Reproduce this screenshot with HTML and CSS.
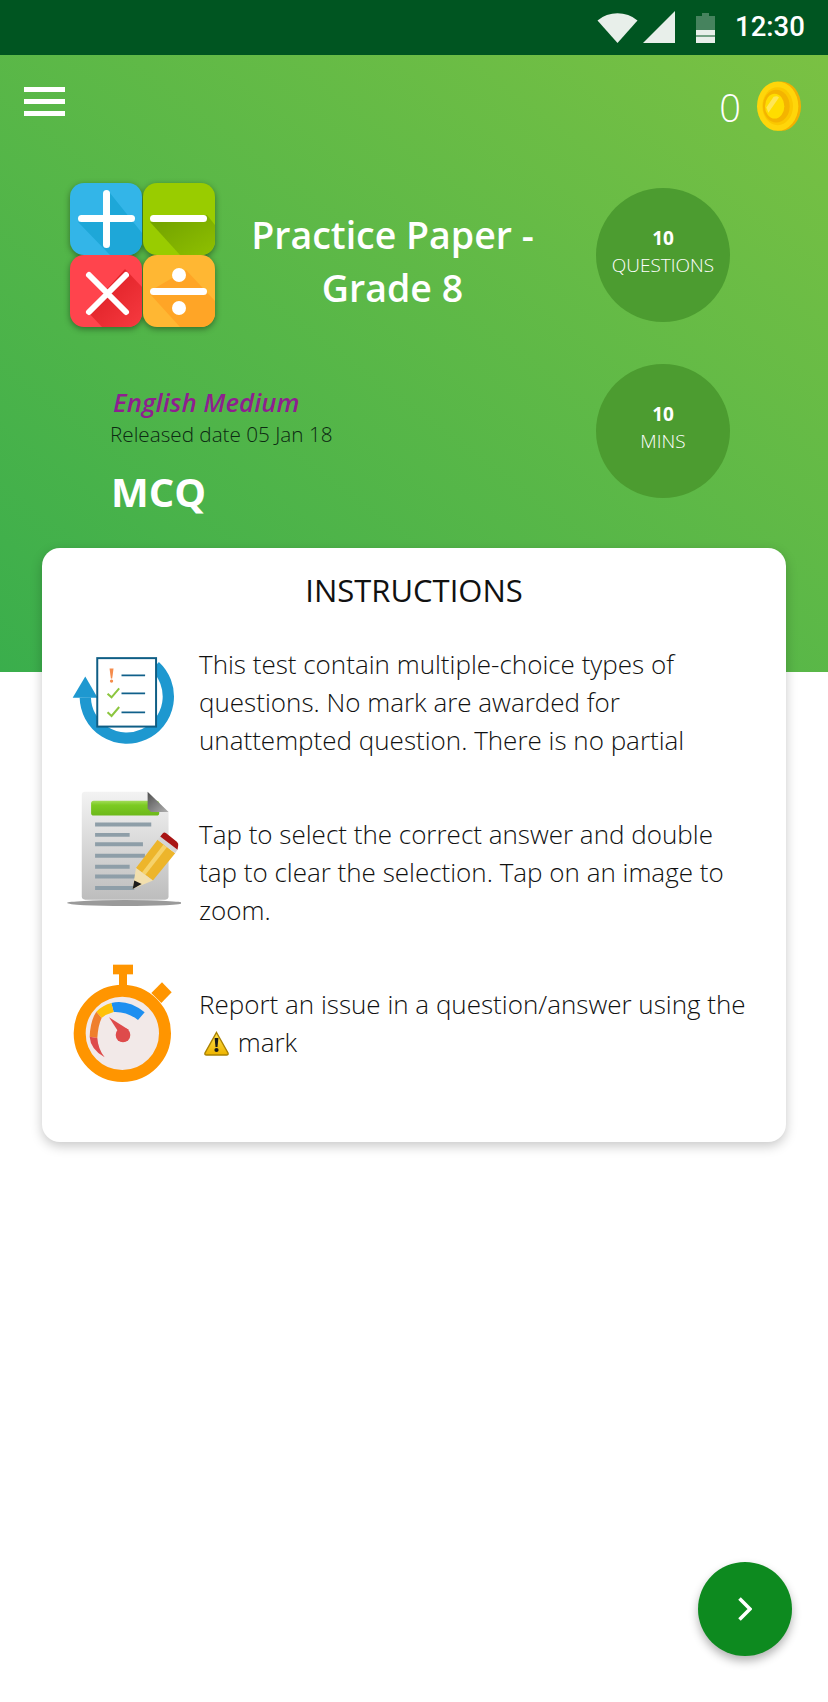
FILE: index.html
```html
<!DOCTYPE html>
<html lang="en">
<head>
    <meta charset="UTF-8">
    <title>Practice Paper</title>
    <link rel="stylesheet" href="styles.css">
</head>
<body>
    <div class="app">
        <div class="status-bar">
            <svg class="wifi" viewBox="0 0 41 32"><path d="M0.5 9.5A31 31 0 0 1 40.5 9.5L20.5 32Z"/></svg>
            <svg class="signal" viewBox="0 0 32 32"><path d="M0 32L32 0V32Z"/></svg>
            <svg class="battery" viewBox="0 0 19 30">
                <path d="M6 0H13V3H19V17H0V3H6Z" opacity="0.3"/>
                <path d="M0 17H19V22.5H0ZM0 23.5H19V30H0Z"/>
            </svg>
            <span class="clock">12:30</span>
        </div>

        <div class="hero">
            <div class="top-bar">
                <div class="menu-icon"><span></span><span></span><span></span></div>
                <div class="coins">
                    <span class="coin-count">0</span>
                    <svg class="coin" viewBox="525 240 138 155">
                        <ellipse cx="601" cy="318" rx="59" ry="74" fill="#f3b000"/>
                        <ellipse cx="590" cy="318" rx="62" ry="74" fill="#ffd60a"/>
                        <ellipse cx="590" cy="318" rx="46" ry="57" fill="#fbc800"/>
                        <ellipse cx="586" cy="318" rx="40" ry="49" fill="#f4b400"/>
                        <ellipse cx="581" cy="318" rx="29" ry="37" fill="#ffdd00"/>
                        <path d="M556 322L578 290Q588 286 594 292L562 338Z" fill="#ffe96a" opacity="0.8"/>
                    </svg>
                </div>
            </div>

            <div class="paper-row">
                <svg class="math-icon" viewBox="0 0 145 145">
                    <defs>
                        <clipPath id="tileA"><rect width="72" height="72" rx="14"/></clipPath>
                        <clipPath id="tileB"><rect x="73" width="72" height="72" rx="14"/></clipPath>
                        <clipPath id="tileC"><rect y="72" width="72" height="72" rx="14"/></clipPath>
                        <clipPath id="tileD"><rect x="73" y="72" width="72" height="72" rx="14"/></clipPath>
                        <linearGradient id="minusShade" x1="0" y1="0" x2="1" y2="1">
                            <stop offset="0" stop-color="#6f9f00"/>
                            <stop offset="1" stop-color="#8fc000"/>
                        </linearGradient>
                        <linearGradient id="timesShade" x1="0" y1="0" x2="1" y2="1">
                            <stop offset="0" stop-color="#d81a20"/>
                            <stop offset="1" stop-color="#f73a40"/>
                        </linearGradient>
                    </defs>
                    <rect width="72" height="72" rx="14" fill="#33b5e8"/>
                    <polygon clip-path="url(#tileA)" points="40,10 72,50 72,72 40,72 8,39 33,39" fill="#1ea7d8"/>
                    <rect x="8" y="32" width="57" height="7" rx="3.5" fill="#fff"/>
                    <rect x="33" y="7" width="7" height="58" rx="3.5" fill="#fff"/>

                    <rect x="73" width="72" height="72" rx="14" fill="#99cc00"/>
                    <polygon clip-path="url(#tileB)" points="137,32 145,42 145,72 110,72 80,39" fill="url(#minusShade)"/>
                    <rect x="80" y="32" width="57" height="7" rx="3.5" fill="#fff"/>

                    <rect y="72" width="72" height="72" rx="14" fill="#ff444d"/>
                    <polygon clip-path="url(#tileC)" points="55,86 72,104 72,144 32,144 17,128" fill="url(#timesShade)"/>
                    <path d="M19 92L56 129M56 92L19 129" stroke="#fff" stroke-width="6" stroke-linecap="round"/>

                    <rect x="73" y="72" width="72" height="72" rx="14" fill="#ffb733"/>
                    <polygon clip-path="url(#tileD)" points="116,87 145,118 145,144 110,144 80,111 80,108" fill="#ffa526"/>
                    <rect x="80" y="105" width="57" height="7" rx="3.5" fill="#fff"/>
                    <circle cx="109" cy="92" r="7" fill="#fff"/>
                    <circle cx="109" cy="125" r="7" fill="#fff"/>
                </svg>
                <h1 class="paper-title">Practice Paper -<br>Grade 8</h1>
                <div class="stat-circle"><b>10</b><span>QUESTIONS</span></div>
            </div>

            <div class="meta-row">
                <div class="meta">
                    <div class="medium">English Medium</div>
                    <div class="released">Released date 05 Jan 18</div>
                    <div class="paper-type">MCQ</div>
                </div>
                <div class="stat-circle"><b>10</b><span>MINS</span></div>
            </div>
        </div>

        <div class="card">
            <h2 class="card-title">INSTRUCTIONS</h2>

            <div class="rule rule-first">
                <div class="rule-icon">
                    <svg class="icon-list" viewBox="95 45 310 270">
                        <path d="M135 170A125 125 0 1 0 345 75" fill="none" stroke="#1e98d0" stroke-width="34"/>
                        <polygon points="97,170 172,170 135,106" fill="#1e98d0"/>
                        <rect x="171" y="51" width="177" height="206" fill="#fff" stroke="#0f5e85" stroke-width="6"/>
                        <path d="M244 103H315M244 157H315M244 214H315" stroke="#10608a" stroke-width="5"/>
                        <path d="M208 82H220L216 112H212Z" fill="#f58c4c"/>
                        <circle cx="214" cy="120" r="5" fill="#f58c4c"/>
                        <path d="M202 158L214 169L237 142M202 214L214 225L237 198" fill="none" stroke="#8cc63f" stroke-width="6"/>
                    </svg>
                </div>
                <p>This test contain multiple-choice types of questions. No mark are awarded for unattempted question. There is no partial</p>
            </div>

            <div class="rule">
                <div class="rule-icon rule-icon-high">
                    <svg class="icon-doc" viewBox="75 450 345 355">
                        <defs>
                            <linearGradient id="pageFill" x1="0" y1="0" x2="0" y2="1">
                                <stop offset="0" stop-color="#f3f3f3"/>
                                <stop offset="1" stop-color="#bdbdbd"/>
                            </linearGradient>
                            <linearGradient id="foldFill" x1="0" y1="0" x2="1" y2="1">
                                <stop offset="0" stop-color="#4f4f4f"/>
                                <stop offset="1" stop-color="#b0b0b0"/>
                            </linearGradient>
                            <linearGradient id="barFill" x1="0" y1="0" x2="0" y2="1">
                                <stop offset="0" stop-color="#a3dc5a"/>
                                <stop offset="0.3" stop-color="#7ccb22"/>
                                <stop offset="1" stop-color="#6cb81a"/>
                            </linearGradient>
                        </defs>
                        <ellipse cx="252" cy="790" rx="174" ry="9" fill="#9a9a9a"/>
                        <path d="M132 455H320L383 516V770A10 10 0 0 1 373 780H132A10 10 0 0 1 122 770V465A10 10 0 0 1 132 455Z" fill="url(#pageFill)"/>
                        <rect x="150" y="482" width="205" height="45" rx="8" fill="url(#barFill)"/>
                        <path d="M320 455L383 516H330L320 506Z" fill="url(#foldFill)"/>
                        <path d="M162 554H331M162 585H266M162 613H306M162 648H312M162 681H266M162 710H290M162 745H280" stroke="#8e9ea8" stroke-width="12"/>
                        <polygon points="285,685 350,600 403,640 336,722" fill="#edb52b"/>
                        <polygon points="303,698 368,614 378,622 313,706" fill="#f6d26a"/>
                        <polygon points="285,685 336,722 275,748" fill="#f2dfae"/>
                        <polygon points="280,722 302,733 275,748" fill="#1c1c1c"/>
                        <polygon points="350,600 358,590 410,630 403,640" fill="#d5d5d5"/>
                        <path d="M358 590L366 580Q370 576 376 580L408 606Q414 612 412 618L410 630Z" fill="#a81414"/>
                    </svg>
                </div>
                <p>Tap to select the correct answer and double tap to clear the selection. Tap on an image to zoom.</p>
            </div>

            <div class="rule">
                <div class="rule-icon">
                    <svg class="icon-timer" viewBox="100 70 300 360">
                        <rect x="220" y="72" width="60" height="29" fill="#ff9500"/>
                        <rect x="238" y="100" width="24" height="40" fill="#ff9500"/>
                        <polygon points="335,157 367,125 396,155 365,187" fill="#ff9500"/>
                        <circle cx="248" cy="278" r="128" fill="#f2e9e8" stroke="#ff9500" stroke-width="36"/>
                        <path d="M215 187Q265 175 315 215L295 238Q262 212 222 214Z" fill="#1e8ff0"/>
                        <path d="M215 187Q190 193 170 213L186 232Q200 220 222 214Z" fill="#ffc107"/>
                        <path d="M170 213Q152 240 150 288L173 292Q175 255 186 232Z" fill="#ef7f2d"/>
                        <path d="M150 288Q152 325 195 350Q175 325 173 292Z" fill="#de4b4b"/>
                        <polygon points="208,230 268,268 235,272" fill="#de4b4b"/>
                        <circle cx="250" cy="283" r="22" fill="#de4b4b"/>
                    </svg>
                </div>
                <p>Report an issue in a question/answer using the <svg class="warn" viewBox="0 0 25 25"><defs><linearGradient id="warnFill" x1="0" y1="0" x2="0" y2="1"><stop offset="0" stop-color="#ffe14d"/><stop offset="1" stop-color="#eeb400"/></linearGradient></defs><path d="M12.5 1.5L24 22Q24.5 24 22.5 24H2.5Q.5 24 1 22Z" fill="url(#warnFill)" stroke="#a98100" stroke-width="1.4"/><path d="M10.6 7H14.4L13.5 16H11.5Z" fill="#1a1a1a"/><circle cx="12.5" cy="19" r="2.1" fill="#1a1a1a"/></svg> mark</p>
            </div>
        </div>

        <button class="next-btn" type="button">
            <svg viewBox="0 0 14 24"><path d="M1.5 1.5L12 12L1.5 22.5" fill="none" stroke="#fff" stroke-width="3.6"/></svg>
        </button>
    </div>
</body>
</html>
```

FILE: styles.css
```css
body {
    margin: 0;
    background-color: #fff;
    font-family: "Open Sans", "Noto Sans", sans-serif;
}

.app {
    position: relative;
    width: 828px;
    height: 1702px;
    overflow: hidden;
}

.status-bar {
    display: flex;
    align-items: flex-start;
    height: 55px;
    background-color: #005521;
    color: #fff;
}

.status-bar svg {
    fill: #e8efea;
    flex: none;
}

.wifi {
    width: 41px;
    height: 32px;
    margin: 11px 0 0 597px;
}

.signal {
    width: 32px;
    height: 32px;
    margin: 11px 0 0 5px;
}

.battery {
    width: 19px;
    height: 30px;
    margin: 13px 0 0 21px;
}

.clock {
    margin: 8px 0 0 20px;
    font-family: Roboto, sans-serif;
    font-size: 27.5px;
    font-weight: 500;
    line-height: 38px;
}

.hero {
    height: 617px;
    background: linear-gradient(to top right, #3aae4c, #7ac143);
}

.top-bar {
    display: flex;
    justify-content: space-between;
    align-items: flex-start;
    height: 78px;
    padding: 26px 26px 0 24px;
}

.menu-icon {
    display: flex;
    flex-direction: column;
    gap: 7px;
    width: 41px;
    margin-top: 6px;
}

.menu-icon span {
    height: 5px;
    background-color: #fff;
}

.coins {
    display: flex;
    align-items: flex-start;
    gap: 15px;
}

.coin-count {
    color: #fff;
    font-size: 38px;
    font-weight: 300;
    line-height: 52px;
}

.coin {
    width: 46px;
    height: 52px;
    margin-top: -1px;
}

.paper-row {
    display: flex;
    align-items: center;
    height: 144px;
    margin-top: 24px;
    padding: 0 98px 0 70px;
}

.math-icon {
    width: 145px;
    height: 145px;
    flex: none;
    filter: drop-shadow(0 2px 3px rgba(0, 0, 0, 0.4));
}

.paper-title {
    flex: 1;
    margin: 11px 26px 0 0;
    color: #fff;
    font-size: 37.5px;
    font-weight: 600;
    line-height: 53px;
    text-align: center;
}

.stat-circle {
    display: flex;
    flex-direction: column;
    align-items: center;
    justify-content: center;
    width: 134px;
    height: 134px;
    flex: none;
    border-radius: 50%;
    background-color: #4c9c30;
    color: #fff;
    font-size: 19px;
    font-weight: 300;
    line-height: 27px;
    padding-bottom: 6px;
    box-sizing: border-box;
}

.stat-circle b {
    font-size: 19px;
    font-weight: 700;
}

.meta-row {
    display: flex;
    justify-content: space-between;
    align-items: flex-start;
    margin-top: 37px;
    padding: 0 98px 0 110px;
}

.meta {
    margin-top: 22px;
}

.medium {
    margin-left: 3px;
    color: #8e1f8f;
    font-size: 25.8px;
    font-style: italic;
    font-weight: 600;
    line-height: 32px;
}

.released {
    color: #0c2a12;
    font-size: 20.7px;
    font-weight: 300;
    line-height: 33px;
}

.paper-type {
    margin: 13px 0 0 1px;
    color: #fff;
    font-size: 40px;
    font-weight: 700;
    line-height: 56px;
}

.card {
    position: relative;
    height: 594px;
    margin: -124px 42px 0;
    border-radius: 18px;
    background-color: #fff;
    box-shadow: 0 4px 12px rgba(0, 0, 0, 0.22);
}

.card-title {
    margin: 0;
    padding-top: 20px;
    color: #111;
    font-size: 31px;
    font-weight: 400;
    line-height: 44px;
    text-align: center;
}

.rule {
    display: flex;
    align-items: center;
    margin-top: 56px;
    padding-left: 23px;
}

.rule-first {
    margin-top: 33px;
}

.rule p {
    width: 550px;
    margin: 0 0 0 18px;
    color: #111;
    font-size: 26px;
    font-weight: 300;
    line-height: 38px;
}

.rule-icon {
    display: flex;
    justify-content: center;
    width: 116px;
    flex: none;
    margin: -32px 0 -30px;
}

.rule-icon-high {
    margin: -76px 0 -30px;
}

.icon-list {
    width: 103px;
    height: 90px;
}

.icon-doc {
    width: 115px;
    height: 118px;
}

.icon-timer {
    width: 100px;
    height: 120px;
    margin-top: 4px;
}

.warn {
    width: 25px;
    height: 25px;
    margin: 0 2px 0 5px;
    vertical-align: -4px;
}

.next-btn {
    position: absolute;
    left: 698px;
    top: 1562px;
    display: flex;
    align-items: center;
    justify-content: center;
    width: 94px;
    height: 94px;
    padding: 0;
    border: none;
    border-radius: 50%;
    background-color: #0d8a1f;
    box-shadow: 0 5px 10px rgba(0, 0, 0, 0.3);
}

.next-btn svg {
    width: 14px;
    height: 24px;
}
```
